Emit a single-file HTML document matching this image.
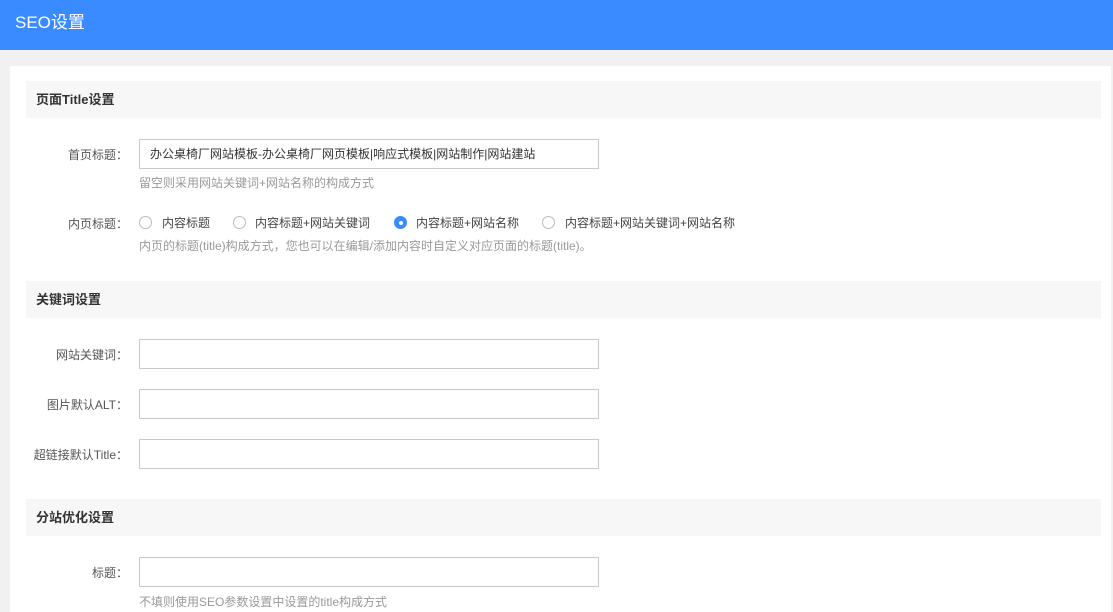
<!DOCTYPE html>
<html><head><meta charset="utf-8"><style>
*{margin:0;padding:0;box-sizing:border-box}
html,body{width:1113px;height:612px;overflow:hidden}
body{background:#f1f1f1;font-family:"Liberation Sans","Noto Sans CJK SC",sans-serif;font-size:12px;color:#333;position:relative}
.hd{position:absolute;left:0;top:0;width:1113px;height:50px;background:#3a8bff;color:#fff;font-size:17px;line-height:46px;padding-left:15px}
.panel{position:absolute;left:10px;top:66px;width:1101px;height:560px;background:#fff}
.sec{position:absolute;left:26px;width:1075px;height:37px;background:#f7f7f7;font-weight:bold;font-size:13px;line-height:37px;padding-left:10px;color:#333}
.lab{position:absolute;right:985px;color:#555;font-size:12px;text-align:right;white-space:nowrap}
.inp{position:absolute;left:139px;width:460px;height:30px;border:1px solid #c9c9c9;background:#fff;padding-left:10px;line-height:28px;font-size:12px;color:#333}
.hint{position:absolute;left:139px;color:#999;font-size:12px;white-space:nowrap}
.r{position:absolute;top:216px;width:13px;height:13px;border:1px solid #bbb;border-radius:50%;background:#fff}
.r.on{background:#3a8bff;border-color:#3a8bff}
.r.on:after{content:"";position:absolute;left:3.5px;top:3.5px;width:4px;height:4px;border-radius:50%;background:#fff}
.rt{position:absolute;top:214px;color:#444;white-space:nowrap}
</style></head><body>
<div class="hd">SEO设置</div>
<div class="panel"></div>
<div class="sec" style="top:81px">页面Title设置</div>
<div class="lab" style="top:146px">首页标题：</div>
<div class="inp" style="top:139px">办公桌椅厂网站模板-办公桌椅厂网页模板|响应式模板|网站制作|网站建站</div>
<div class="hint" style="top:174px">留空则采用网站关键词+网站名称的构成方式</div>
<div class="lab" style="top:215px">内页标题：</div>
<div class="r" style="left:139px"></div><div class="rt" style="left:162px">内容标题</div>
<div class="r" style="left:233px"></div><div class="rt" style="left:255px">内容标题+网站关键词</div>
<div class="r on" style="left:394px"></div><div class="rt" style="left:416px">内容标题+网站名称</div>
<div class="r" style="left:542px"></div><div class="rt" style="left:565px">内容标题+网站关键词+网站名称</div>
<div class="hint" style="top:237px">内页的标题(title)构成方式，您也可以在编辑/添加内容时自定义对应页面的标题(title)。</div>
<div class="sec" style="top:281px">关键词设置</div>
<div class="lab" style="top:346px">网站关键词：</div>
<div class="inp" style="top:339px"></div>
<div class="lab" style="top:396px">图片默认ALT：</div>
<div class="inp" style="top:389px"></div>
<div class="lab" style="top:446px">超链接默认Title：</div>
<div class="inp" style="top:439px"></div>
<div class="sec" style="top:499px">分站优化设置</div>
<div class="lab" style="top:564px">标题：</div>
<div class="inp" style="top:557px"></div>
<div class="hint" style="top:593px">不填则使用SEO参数设置中设置的title构成方式</div>
</body></html>
